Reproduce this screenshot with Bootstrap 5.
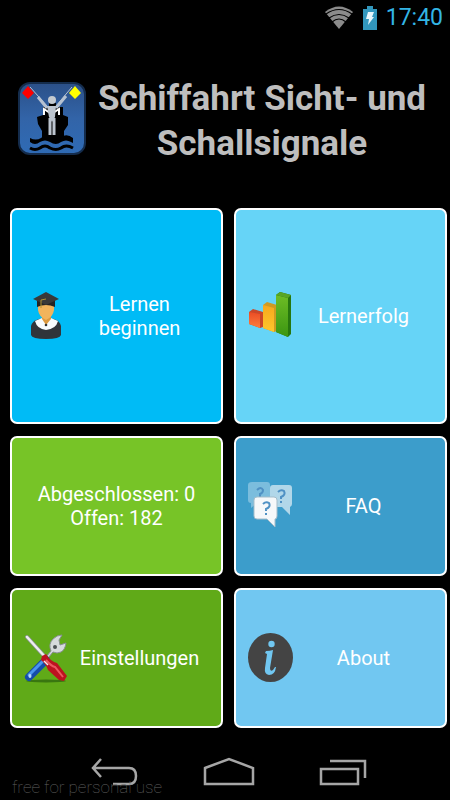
<!DOCTYPE html>
<html lang="de">
<head>
<meta charset="utf-8">
<meta name="viewport" content="width=device-width, initial-scale=1">
<title>Schiffahrt Sicht- und Schallsignale</title>
<link href="https://cdn.jsdelivr.net/npm/bootstrap@5.3.0/dist/css/bootstrap.min.css" rel="stylesheet">
<style>
body { background: #000; font-family: Roboto, "Liberation Sans", sans-serif; }
svg { display: block; flex: none; }
.status-bar { height: 36px; padding: 0 7px; gap: 9px; color: #33b5e5; font-size: 23px; line-height: 36px; }
.app-head { min-height: 172px; padding: 0 16px 8px 18px; gap: 4px; }
.app-title { color: #bebebe; font-size: 35px; line-height: 45px; font-weight: 700; padding-top: 6px; }
.tiles { display: grid; grid-template-columns: 1fr 1fr; grid-template-rows: 216fr 140fr 140fr; gap: 12px 11px; padding: 0 3px 0 10px; }
.tile { border: 2px solid #fff; border-radius: 7px; padding: 0 12px; color: #fff; font-size: 20px; line-height: 24px; }
.tile-learn { background: #00bbf6; }
.tile-progress { background: #66d4f7; }
.tile-count { background: #77c427; }
.tile-faq { background: #3c9dcb; }
.tile-settings { background: #60aa18; }
.tile-about { background: #71c7f1; }
.nav-keys { height: 72px; gap: 64px; padding: 16px 0 0 8px; }
.nav-keys button { background: none; }
.license-note { left: 12px; bottom: 2px; color: #606060; font-size: 17px; line-height: 22px; font-weight: 100; }
</style>
</head>
<body>
<div class="d-flex flex-column min-vh-100 position-relative">
  <div class="status-bar d-flex align-items-center justify-content-end">
    <svg width="30" height="24" viewBox="0 0 30 24" aria-hidden="true">
      <path d="M1 6Q15-5 29 6L15 23Z" fill="#8b8b8b"/>
      <path d="M2 8Q15-1 28 8M5 12Q15 5 25 12M8 16Q15 10 22 16" fill="none" stroke="#000" stroke-width="1.2"/>
    </svg>
    <svg width="14" height="24" viewBox="0 0 14 24" aria-hidden="true">
      <path d="M0 3h4V0h6v3h4v21H0z" fill="#3297bd"/>
      <path d="M5 6h6l-2 5h2l-6 8 1-6H3z" fill="#e8f6fb"/>
    </svg>
    <span>17:40</span>
  </div>

  <header class="app-head d-flex align-items-center">
    <svg width="68" height="73" viewBox="0 0 68 73" aria-hidden="true">
      <defs><linearGradient id="sea" x2="0" y2="1"><stop stop-color="#2b5088"/><stop offset=".5" stop-color="#3264a8"/><stop offset="1" stop-color="#2f6bb5"/></linearGradient></defs>
      <rect x="1" y="1" width="66" height="71" rx="11" fill="url(#sea)" stroke="#142c4c" stroke-width="2"/>
      <path d="M19 35l6-2v-8h6v-4h7v4h7v8l5 2v8l-4 6v8H24v-8l-4-7z" fill="#000"/>
      <path d="M12 56v4q5 4 10 0 5-3 10 0 6 4 11 0 5-3 10 0l2 1v-5q-6-5-12-1-6 4-11 0-5-3-9 1-5 3-11 0z" fill="#000"/>
      <path d="M12 66q5 3 10 0 5-4 10 0 6 3 11 0 5-4 12 0" fill="none" stroke="#000" stroke-width="3"/>
      <path d="M12 5l17 19M54 5L38 24" stroke="#b5c1d1" stroke-width="1"/>
      <path d="M20 15l9 11M48 14l-10 12" stroke="#b5c1d1" stroke-width="3"/>
      <path d="M26 33v-6l6 4M41 33v-6l-6 4" stroke="#fff" stroke-width="2" fill="none"/>
      <circle cx="34" cy="18" r="4" fill="#c4cad0"/>
      <path d="M29 24h9l-1 11-3 5-3-5z" fill="#bdc5cf"/>
      <path d="M32 36v17M36 36v17" stroke="#bdc5cf" stroke-width="3"/>
      <path d="M10 4l6 7-6 6-6-6z" fill="#f00"/>
      <path d="M57 4l6 7-6 6-6-6z" fill="#ff0"/>
    </svg>
    <h1 class="app-title flex-fill text-center mb-0">Schiffahrt Sicht- und Schallsignale</h1>
  </header>

  <main class="tiles flex-grow-1">
    <button type="button" class="tile tile-learn d-flex align-items-center">
      <svg width="46" height="50" viewBox="0 0 46 50" aria-hidden="true">
        <path d="M7 44V35q1-5 8-7l7-1 8 1q6 2 7 7v9q-1 4-15 4T7 44z" fill="#30343a"/>
        <path d="M11 30l7-3h9l7 3q-2 8-12 9-9-1-11-9z" fill="#f8fbfd"/>
        <path d="M18 23h9v5l-5 6-4-6z" fill="#dc993f"/>
        <path d="M14 13h16v6q-1 7-8 10-7-3-8-10z" fill="#f2b45c"/>
        <path d="M13 9h18v7q-9-4-18 0z" fill="#242424"/>
        <path d="M9 8l13-7 13 7-13 6z" fill="#393939"/>
        <path d="M22 8l-5 1v8" fill="none" stroke="#ae9132"/>
        <circle cx="22" cy="34" r="1.3" fill="#333"/>
      </svg>
      <span class="flex-fill text-center">Lernen beginnen</span>
    </button>
    <button type="button" class="tile tile-progress d-flex align-items-center">
      <svg width="46" height="50" viewBox="0 0 46 50" aria-hidden="true">
        <defs>
          <linearGradient id="barRed" x2="0" y2="1"><stop stop-color="#e94c25"/><stop offset="1" stop-color="#ff7d3c"/></linearGradient>
          <linearGradient id="barYellow" x2="0" y2="1"><stop stop-color="#f6a81c"/><stop offset="1" stop-color="#ffc72d"/></linearGradient>
          <linearGradient id="barGreen" x2="0" y2="1"><stop stop-color="#6dbd25"/><stop offset="1" stop-color="#3b9512"/></linearGradient>
        </defs>
        <path d="M1 21l4-3 10 3v15l-3 1-11-4z" fill="#ca4728"/><path d="M1 21l11 2v14L1 33z" fill="url(#barRed)"/>
        <path d="M15 14l4-3 10 3v26l-3 1-11-4z" fill="#cf9a22"/><path d="M15 14l11 3v24l-11-4z" fill="url(#barYellow)"/>
        <path d="M28 4l4-3 11 3v39l-3 3-12-5z" fill="#27770e"/><path d="M28 4l12 3v39l-12-5z" fill="url(#barGreen)"/><path d="M28 4l4-3 11 3-3 3z" fill="#58a526"/>
      </svg>
      <span class="flex-fill text-center">Lernerfolg</span>
    </button>

    <button type="button" class="tile tile-count d-flex align-items-center justify-content-center">
      <span>Abgeschlossen: 0<br>Offen: 182</span>
    </button>
    <button type="button" class="tile tile-faq d-flex align-items-center">
      <svg width="46" height="50" viewBox="0 0 46 50" aria-hidden="true">
        <g fill="none" stroke="#4f91c4" stroke-width="2">
          <path d="M4 1h15q3 0 3 3v15q0 3-3 3H9l-6 5v-5q-3 0-3-3V4q0-3 4-3z" fill="#7bbddd" stroke="none"/>
          <path d="M9 9q4-4 6 0 0 3-3 4v3"/>
          <path d="M25 4h16q3 0 3 3v16q0 2-2 3v8l-8-8h-9q-3 0-3-3V7q0-3 3-3z" fill="#b1d7e9" stroke="none"/>
          <path d="M30 11q3-3 6-1 2 4-3 6v2m0 2v2"/>
          <path d="M9 16h17q3 0 3 3v16q0 3-2 3v8l-8-8H9q-3 0-3-3V19q0-3 3-3z" fill="#f5f8fa" stroke="#a5bdca" stroke-width="1"/>
          <path d="M15 23q3-3 6-1 2 4-3 6v2m0 2v2"/>
        </g>
      </svg>
      <span class="flex-fill text-center">FAQ</span>
    </button>

    <button type="button" class="tile tile-settings d-flex align-items-center">
      <svg width="46" height="50" viewBox="0 0 46 50" aria-hidden="true">
        <ellipse cx="22" cy="48" rx="20" ry="1.5" fill="#397610"/>
        <path d="M3 4l20 22" stroke="#8c9298" stroke-width="4" stroke-linecap="round"/>
        <path d="M3 4l20 22" stroke="#eee" stroke-width="2.5" stroke-linecap="round"/>
        <path d="M22 24l5-6q-3-7 2-12 4-4 9-4l-3 5 1 5 6-2q-1 7-5 9-4 2-8 0l-5 6z" fill="#d6dadd" stroke="#888e92"/>
        <circle cx="31" cy="14" r="2" fill="#4b5055"/>
        <path d="M22 27L5 44" stroke="#154ca9" stroke-width="8" stroke-linecap="round"/>
        <path d="M20 27L5 42" stroke="#4a95ed" stroke-width="3" stroke-linecap="round"/>
        <ellipse cx="6" cy="43" rx="1.5" ry="2" fill="#b5ddff"/>
        <path d="M18 23l4-2q5 8 11 9l10 13-3 5-5-1-11-10q-2-6-7-10z" fill="#bd1220"/>
        <path d="M22 27q5 6 9 7l8 10" fill="none" stroke="#ed5560" stroke-width="2"/>
        <path d="M20 28l4 4" stroke="#eee" stroke-width="1.5"/>
      </svg>
      <span class="flex-fill text-center">Einstellungen</span>
    </button>
    <button type="button" class="tile tile-about d-flex align-items-center">
      <svg width="46" height="50" viewBox="0 0 46 50" aria-hidden="true">
        <ellipse cx="22.500" cy="24.500" rx="22.500" ry="24.500" fill="#444"/>
        <circle cx="23.500" cy="11" r="3.200" fill="#71c7f1"/>
        <path d="M18 18q4 0 7-1l-3 18q0 4 3 2l2-3h1q-1 8-7 8-5-1-4-7l2-14-2-1z" fill="#71c7f1"/>
      </svg>
      <span class="flex-fill text-center">About</span>
    </button>
  </main>

  <nav class="nav-keys d-flex align-items-center justify-content-center" aria-label="System">
    <button type="button" class="border-0 p-0" aria-label="Zurück">
      <svg width="48" height="30" viewBox="0 0 48 30" fill="none" stroke="#a6a6a6" stroke-width="2.5"><path d="M10 2L2 11l8 9M2 11h36q7 0 7 8t-7 8H22"/></svg>
    </button>
    <button type="button" class="border-0 p-0" aria-label="Startseite">
      <svg width="52" height="30" viewBox="0 0 52 30" fill="none" stroke="#a6a6a6" stroke-width="2.5"><path d="M2 11L26 2l24 9v16H2z"/></svg>
    </button>
    <button type="button" class="border-0 p-0" aria-label="Letzte Apps">
      <svg width="48" height="30" viewBox="0 0 48 30" fill="none" stroke="#a6a6a6" stroke-width="2.5"><path d="M2 12h37v15H2zM11 4h35v17"/></svg>
    </button>
  </nav>
  <div class="license-note position-absolute">free for personal use</div>
</div>
<script src="https://cdn.jsdelivr.net/npm/bootstrap@5.3.0/dist/js/bootstrap.bundle.min.js"></script>
</body>
</html>
